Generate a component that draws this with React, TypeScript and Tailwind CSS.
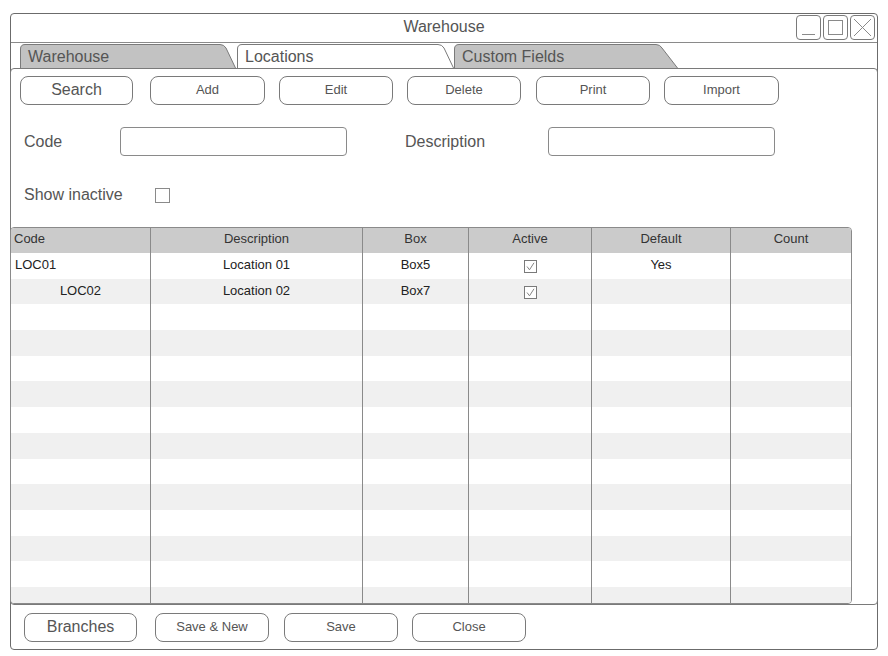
import type { ReactNode } from 'react';

const FONT = "font-['Liberation_Sans',Arial,sans-serif]";

// widths + gaps measured off the mockup
const toolbar = [
  { label: 'Search', big: true, cls: 'w-[113px]' },
  { label: 'Add', cls: 'w-[115px] ml-[17px]' },
  { label: 'Edit', cls: 'w-[114px] ml-[14px]' },
  { label: 'Delete', cls: 'w-[114px] ml-[14px]' },
  { label: 'Print', cls: 'w-[114px] ml-[15px]' },
  { label: 'Import', cls: 'w-[115px] ml-[14px]' },
];

const footer = [
  { label: 'Branches', big: true, cls: 'w-[113px]' },
  { label: 'Save & New', cls: 'w-[114px] ml-[18px]' },
  { label: 'Save', cls: 'w-[114px] ml-[15px]' },
  { label: 'Close', cls: 'w-[114px] ml-[14px]' },
];

const columns = [
  { label: 'Code', w: 'w-[140px]', align: 'text-left pl-[3px]' },
  { label: 'Description', w: 'w-[212px]', align: 'text-center' },
  { label: 'Box', w: 'w-[106px]', align: 'text-center' },
  { label: 'Active', w: 'w-[123px]', align: 'text-center' },
  { label: 'Default', w: 'w-[139px]', align: 'text-center' },
  { label: 'Count', w: 'flex-1', align: 'text-center' },
];

type Row = { code?: string; indent?: boolean; desc?: string; box?: string; active?: boolean; def?: string };

const rows: Row[] = [
  { code: 'LOC01', desc: 'Location 01', box: 'Box5', active: true, def: 'Yes' },
  { code: 'LOC02', indent: true, desc: 'Location 02', box: 'Box7', active: true },
  ...Array.from({ length: 12 }, () => ({})),
];

function Btn({ children, big, className = '' }: { children: ReactNode; big?: boolean; className?: string }) {
  return (
    <button
      type="button"
      className={`flex h-[29px] shrink-0 items-center justify-center rounded-[8px] border border-[#7a7a7a] bg-white pb-[2px] text-[#555] ${big ? 'text-[16px]' : 'text-[13px]'} ${className}`}
    >
      {children}
    </button>
  );
}

function Tab({ label, active, width, slant }: { label: string; active?: boolean; width: number; slant: number }) {
  const h = 25;
  const d = `M0.5 ${h} L0.5 6 Q0.5 1.5 5 1.5 L${width - slant - 4} 1.5 Q${width - slant} 1.5 ${width - slant + 2} 5 L${width - 0.5} ${h}`;
  return (
    <div className="relative h-[25px] shrink-0" style={{ width }}>
      <svg className="absolute inset-0" width={width} height={h + 1} viewBox={`0 0 ${width} ${h + 1}`}>
        <path d={d + ' Z'} fill={active ? '#ffffff' : '#c2c2c2'} stroke="none" />
        <path d={d} fill="none" stroke="#7a7a7a" strokeWidth="1" />
      </svg>
      <span className="relative block pl-[8px] pt-[4px] text-[16px] leading-[20px] text-[#555]">{label}</span>
    </div>
  );
}

function Check() {
  return (
    <span className="inline-flex h-[13px] w-[13px] items-center justify-center border border-[#7a7a7a] bg-white">
      <svg width="9" height="9" viewBox="0 0 9 9">
        <path d="M1 4.5 L3.5 7.8 L8 0.8" fill="none" stroke="#777" strokeWidth="0.9" />
      </svg>
    </span>
  );
}

export default function App() {
  return (
    <div className={`h-[656px] w-[888px] bg-white pl-[10px] pt-[13px] ${FONT}`}>
      <div className="flex h-[637px] w-[868px] flex-col rounded-[4px] border border-[#6b6b6b]">
        {/* title bar */}
        <div className="relative flex h-[29px] shrink-0 items-center justify-center border-b border-[#8a8a8a]">
          <span className="pb-[2px] text-[16px] text-[#555]">Warehouse</span>
          <div className="absolute right-[2px] top-[1px] flex gap-[2px]">
            {['min', 'max', 'close'].map((k) => (
              <div key={k} className="flex h-[25px] w-[25px] items-center justify-center rounded-[4px] border border-[#7a7a7a]">
                <svg width="21" height="21" viewBox="0 0 21 21">
                  {k === 'min' && <path d="M4 17.5 H17" stroke="#8a8a8a" strokeWidth="1" />}
                  {k === 'max' && <rect x="3.5" y="3.5" width="14" height="14" fill="none" stroke="#8a8a8a" strokeWidth="1" />}
                  {k === 'close' && <path d="M2 2 L19 19 M19 2 L2 19" stroke="#8a8a8a" strokeWidth="1" />}
                </svg>
              </div>
            ))}
          </div>
        </div>

        {/* tabs */}
        <div className="flex h-[25px] shrink-0 items-end pl-[9px]">
          <Tab label="Warehouse" width={216} slant={12} />
          <div className="w-[1px]" />
          <Tab label="Locations" active width={217} slant={12} />
          <Tab label="Custom Fields" width={224} slant={18} />
        </div>

        {/* main panel */}
        <div className="-mx-px flex h-[537px] shrink-0 flex-col rounded-[4px] border border-[#7a7a7a]">
          <div className="flex pl-[9px] pt-[7px]">
            {toolbar.map((b) => (
              <Btn key={b.label} big={b.big} className={b.cls}>
                {b.label}
              </Btn>
            ))}
          </div>

          <div className="mt-[22px] flex items-center text-[16px] text-[#555]">
            <span className="w-[109px] pl-[13px]">Code</span>
            <div className="h-[29px] w-[227px] rounded-[4px] border border-[#8a8a8a]" />
            <span className="ml-[58px] w-[143px]">Description</span>
            <div className="h-[29px] w-[227px] rounded-[4px] border border-[#8a8a8a]" />
          </div>

          <div className="mt-[27px] flex items-center text-[16px] text-[#555]">
            <span className="w-[144px] pl-[13px]">Show inactive</span>
            <span className="h-[15px] w-[15px] border border-[#8a8a8a]" />
          </div>

          {/* grid */}
          <div className="-ml-px mt-[20px] flex w-[842px] flex-1 flex-col overflow-hidden rounded-[4px] border border-[#8a8a8a] text-[13px]">
            <div className="flex h-[25px] shrink-0 bg-[#cbcbcb] text-[#333]">
              {columns.map((c, i) => (
                <div
                  key={c.label}
                  className={`${c.w} ${c.align} shrink-0 leading-[22px] ${i < columns.length - 1 ? 'border-r border-[#8a8a8a]' : ''}`}
                >
                  {c.label}
                </div>
              ))}
            </div>
            <div className="flex flex-1 flex-col overflow-hidden">
              {rows.map((r, idx) => (
                <div key={idx} className={`flex h-[25.7px] shrink-0 text-[#222] ${idx % 2 ? 'bg-[#f0f0f0]' : 'bg-white'}`}>
                  <div className={`w-[140px] shrink-0 border-r border-[#8a8a8a] leading-[24px] ${r.indent ? 'text-center' : 'pl-[4px]'}`}>
                    {r.code}
                  </div>
                  <div className="w-[212px] shrink-0 border-r border-[#8a8a8a] text-center leading-[24px]">{r.desc}</div>
                  <div className="w-[106px] shrink-0 border-r border-[#8a8a8a] text-center leading-[24px]">{r.box}</div>
                  <div className="flex w-[123px] shrink-0 items-center justify-center border-r border-[#8a8a8a] pt-[2px]">
                    {r.active && <Check />}
                  </div>
                  <div className="w-[139px] shrink-0 border-r border-[#8a8a8a] text-center leading-[24px]">{r.def}</div>
                  <div className="flex-1" />
                </div>
              ))}
            </div>
          </div>
        </div>

        {/* footer */}
        <div className="flex pl-[13px] pt-[8px]">
          {footer.map((b) => (
            <Btn key={b.label} big={b.big} className={b.cls}>
              {b.label}
            </Btn>
          ))}
        </div>
      </div>
    </div>
  );
}
